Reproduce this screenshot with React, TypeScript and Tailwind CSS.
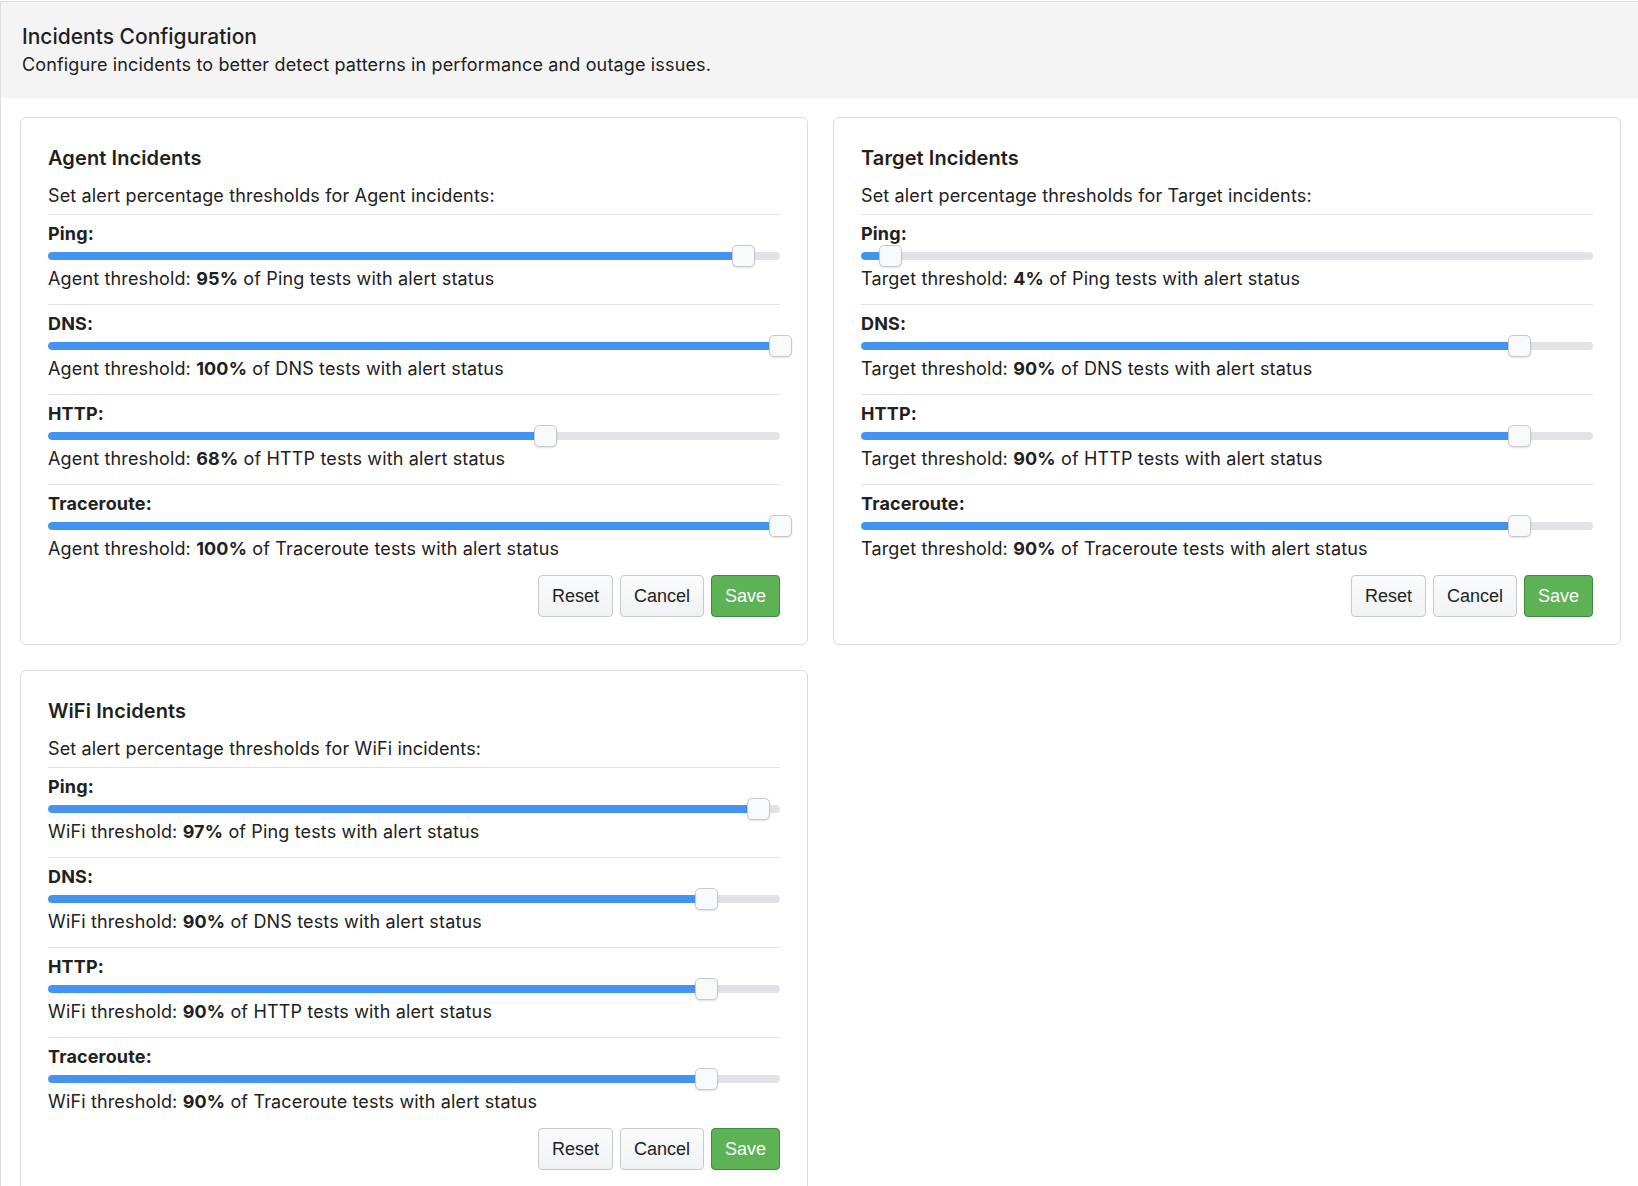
import React from "react";

type Row = { name: string; value: number };

interface PanelProps {
  title: string;
  kind: string;
  rows: Row[];
}

const agentRows: Row[] = [
  { name: "Ping", value: 95 },
  { name: "DNS", value: 100 },
  { name: "HTTP", value: 68 },
  { name: "Traceroute", value: 100 },
];

const targetRows: Row[] = [
  { name: "Ping", value: 4 },
  { name: "DNS", value: 90 },
  { name: "HTTP", value: 90 },
  { name: "Traceroute", value: 90 },
];

const wifiRows: Row[] = [
  { name: "Ping", value: 97 },
  { name: "DNS", value: 90 },
  { name: "HTTP", value: 90 },
  { name: "Traceroute", value: 90 },
];

function Slider({ value }: { value: number }) {
  return (
    <div className="relative flex h-5 items-center">
      {/* track */}
      <div className="h-2 w-full overflow-hidden rounded-full bg-[#e1e3e6]">
        <div className="h-full rounded-full bg-[#4394f0]" style={{ width: `${value}%` }} />
      </div>
      {/* thumb */}
      <div
        className="absolute top-[-1px] h-[22px] w-[23px] rounded-[5px] border border-[#c6c8cb] bg-[#f8f9fa] shadow-[0_1px_2px_rgba(0,0,0,0.12)]"
        style={{ left: `calc(${value}% - 11.5px)` }}
      />
    </div>
  );
}

function Panel({ title, kind, rows }: PanelProps) {
  return (
    <div className="rounded-[6px] border border-[#dcdcdc] bg-white p-[27px]">
      <h3 className="text-[20px] leading-[26px] font-semibold tracking-[0.1px] text-[#1f1f1f]">{title}</h3>
      <p className="mt-[13px] pb-[6px] leading-6">
        Set alert percentage thresholds for {kind} incidents:
      </p>

      {rows.map((row, i) => (
        <div
          key={row.name}
          className={`border-t border-[#e2e2e2] pt-[7px] ${i === rows.length - 1 ? "pb-[14px]" : "pb-[13px]"}`}
        >
          <div className="leading-6 font-bold">{row.name}:</div>
          <Slider value={row.value} />
          <div className="mt-px leading-6">
            {kind} threshold: <span className="font-bold">{row.value}%</span> of {row.name} tests with
            alert status
          </div>
        </div>
      ))}

      <div className="flex justify-end gap-[7px] font-['Liberation_Sans',Arial,sans-serif] text-[18px] leading-6 tracking-normal">
        <button className="rounded-[4px] border border-[#c8c9cb] bg-gradient-to-b from-[#fafbfc] to-[#f1f2f4] px-[13px] py-2 text-[#222]">
          Reset
        </button>
        <button className="rounded-[4px] border border-[#c8c9cb] bg-gradient-to-b from-[#fafbfc] to-[#f1f2f4] px-[13px] py-2 text-[#222]">
          Cancel
        </button>
        <button className="rounded-[4px] border border-[#3f8a3c] bg-[#5cb254] px-[13px] py-2 text-white">
          Save
        </button>
      </div>
    </div>
  );
}

export default function App() {
  return (
    <div className="min-h-screen bg-white pt-px font-['Inter','Liberation_Sans',sans-serif] text-[18px] tracking-[0.15px] text-[#212121]">
      <div className="border-l border-t border-[#dddddd]">
        <div className="bg-[#f4f4f4] px-[21px] pt-[21px] pb-[21px]">
          <h1 className="text-[21px] leading-[28px] font-medium tracking-normal text-[#1f1f1f]">Incidents Configuration</h1>
          <p className="mt-[2px] leading-6">Configure incidents to better detect patterns in performance and outage issues.</p>
        </div>

        <div className="grid grid-cols-[788px_788px] gap-[25px] px-[19px] pt-[19px]">
          <Panel title="Agent Incidents" kind="Agent" rows={agentRows} />
          <Panel title="Target Incidents" kind="Target" rows={targetRows} />
          <Panel title="WiFi Incidents" kind="WiFi" rows={wifiRows} />
        </div>
      </div>
    </div>
  );
}
